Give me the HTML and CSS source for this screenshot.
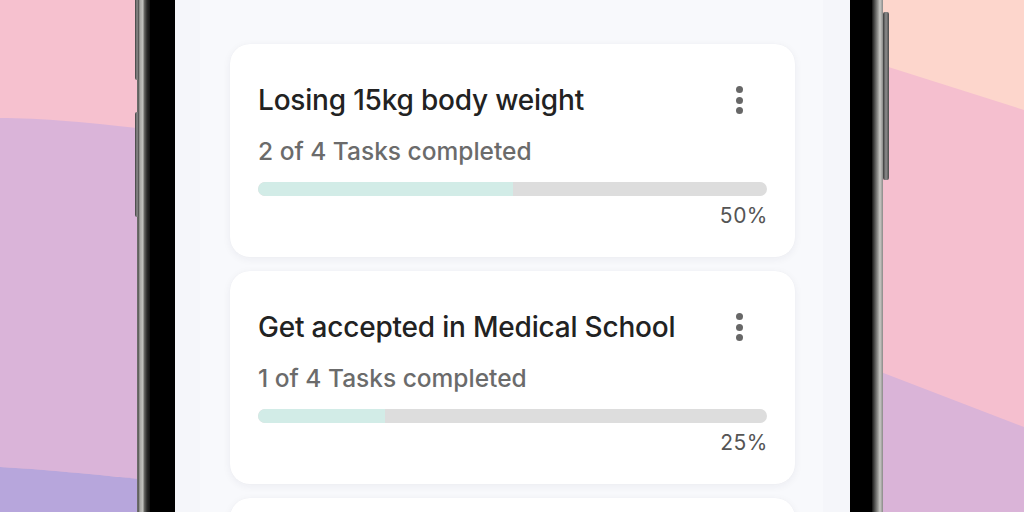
FILE: index.html
```html
<!DOCTYPE html>
<html lang="en">
<head>
<meta charset="utf-8">
<title>Goals</title>
<link rel="stylesheet" href="styles.css">
</head>
<body>
<svg class="backdrop" width="1024" height="512" viewBox="0 0 1024 512" aria-hidden="true">
  <rect x="0" y="0" width="512" height="512" fill="#f6c1cf"/>
  <path d="M0 118 C40 118 90 122 160 131 L160 481 C90 474 40 469 0 467 Z" fill="#dab4d9"/>
  <path d="M0 467 C40 469 90 474 160 481 L160 512 L0 512 Z" fill="#b7a6dc"/>
  <rect x="512" y="0" width="512" height="512" fill="#fdd6cc"/>
  <path d="M860 58 L1024 110 L1024 512 L860 512 Z" fill="#f5bfcf"/>
  <path d="M860 364 L1024 427 L1024 512 L860 512 Z" fill="#dab4d8"/>
</svg>

<div class="stage">
  <div class="phone">
    <span class="btn btn-left-a"></span>
    <span class="btn btn-left-b"></span>
    <span class="btn btn-right"></span>
    <div class="bezel">
      <div class="screen">
        <div class="panel">
          <div class="card">
            <div class="card-head">
              <h2 class="card-title">Losing 15kg body weight</h2>
              <span class="kebab"><i></i><i></i><i></i></span>
            </div>
            <p class="card-sub">2 of 4 Tasks completed</p>
            <div class="bar"><div class="bar-fill" style="width:50%"></div></div>
            <div class="pct">50%</div>
          </div>
          <div class="card">
            <div class="card-head">
              <h2 class="card-title">Get accepted in Medical School</h2>
              <span class="kebab"><i></i><i></i><i></i></span>
            </div>
            <p class="card-sub">1 of 4 Tasks completed</p>
            <div class="bar"><div class="bar-fill" style="width:25%"></div></div>
            <div class="pct">25%</div>
          </div>
          <div class="card"></div>
        </div>
      </div>
    </div>
  </div>
</div>
</body>
</html>
```

FILE: styles.css
```css
html, body {
  margin: 0;
  padding: 0;
}
body {
  width: 1024px;
  height: 512px;
  overflow: hidden;
  position: relative;
  font-family: Inter, "Noto Sans", "Liberation Sans", sans-serif;
}
.backdrop {
  position: absolute;
  left: 0;
  top: 0;
}
.stage {
  position: relative;
  display: flex;
  padding-left: 137px;
  height: 512px;
  overflow: hidden;
}
.phone {
  position: relative;
  width: 746px;
  height: 512px;
  padding: 0 11px 0 13px;
  box-sizing: border-box;
  background: linear-gradient(90deg,
    #8a8a88 0px, #4a4a48 1px, #a9a9a6 3px, #c4c4c0 6px, #6d6d6a 7px, #2b2b2a 10px, #111 13px,
    #111 calc(100% - 11px), #2b2b2a calc(100% - 10px), #989895 calc(100% - 5px), #c8c8c4 calc(100% - 3px), #8a8a88 100%);
  display: flex;
}
.btn {
  position: absolute;
  width: 4px;
  background: linear-gradient(90deg, #3a3a3a, #8e8e8e, #4a4a4a);
  border-radius: 2px;
}
.btn-left-a { left: -2px; top: -20px; height: 100px; }
.btn-left-b { left: -2px; top: 112px; height: 105px; }
.btn-right { right: -6px; top: 12px; height: 168px; width: 6px; }
.bezel {
  flex: 1;
  background: #000;
  padding: 0 22px 0 25px;
  display: flex;
}
.screen {
  flex: 1;
  background: #f5f6fa;
  padding: 0 27px 0 25px;
  display: flex;
}
.panel {
  flex: 1;
  background: #f8f9fc;
  padding: 44px 28px 0 30px;
  display: flex;
  flex-direction: column;
  gap: 14px;
}
.card {
  background: #ffffff;
  border-radius: 20px;
  box-shadow: 0 2px 8px rgba(40, 40, 70, 0.06), 0 0 1px rgba(40, 40, 70, 0.05);
  height: 213px;
  box-sizing: border-box;
  padding: 40px 28px 0 28px;
  flex-shrink: 0;
}
.card-head {
  display: flex;
  justify-content: space-between;
  align-items: center;
}
.card-title {
  margin: 0;
  font-size: 28px;
  line-height: 32px;
  font-weight: 500;
  color: #222222;
  letter-spacing: -0.2px;
}
.kebab {
  display: flex;
  flex-direction: column;
  gap: 3.5px;
  margin-right: 24px;
}
.kebab i {
  display: block;
  width: 7px;
  height: 7px;
  border-radius: 50%;
  background: #676767;
}
.card-sub {
  margin: 21px 0 0 0;
  font-size: 24.5px;
  line-height: 28px;
  font-weight: 500;
  color: #6b6b6b;
}
.bar {
  margin-top: 17px;
  height: 14px;
  border-radius: 7px;
  background: #dddddd;
  overflow: hidden;
}
.bar-fill {
  height: 100%;
  background: #d2ece7;
  border-radius: 7px 0 0 7px;
}
.pct {
  margin-top: 8px;
  margin-right: -1px;
  text-align: right;
  font-size: 21px;
  line-height: 24px;
  color: #555555;
  letter-spacing: 0.5px;
}
```
